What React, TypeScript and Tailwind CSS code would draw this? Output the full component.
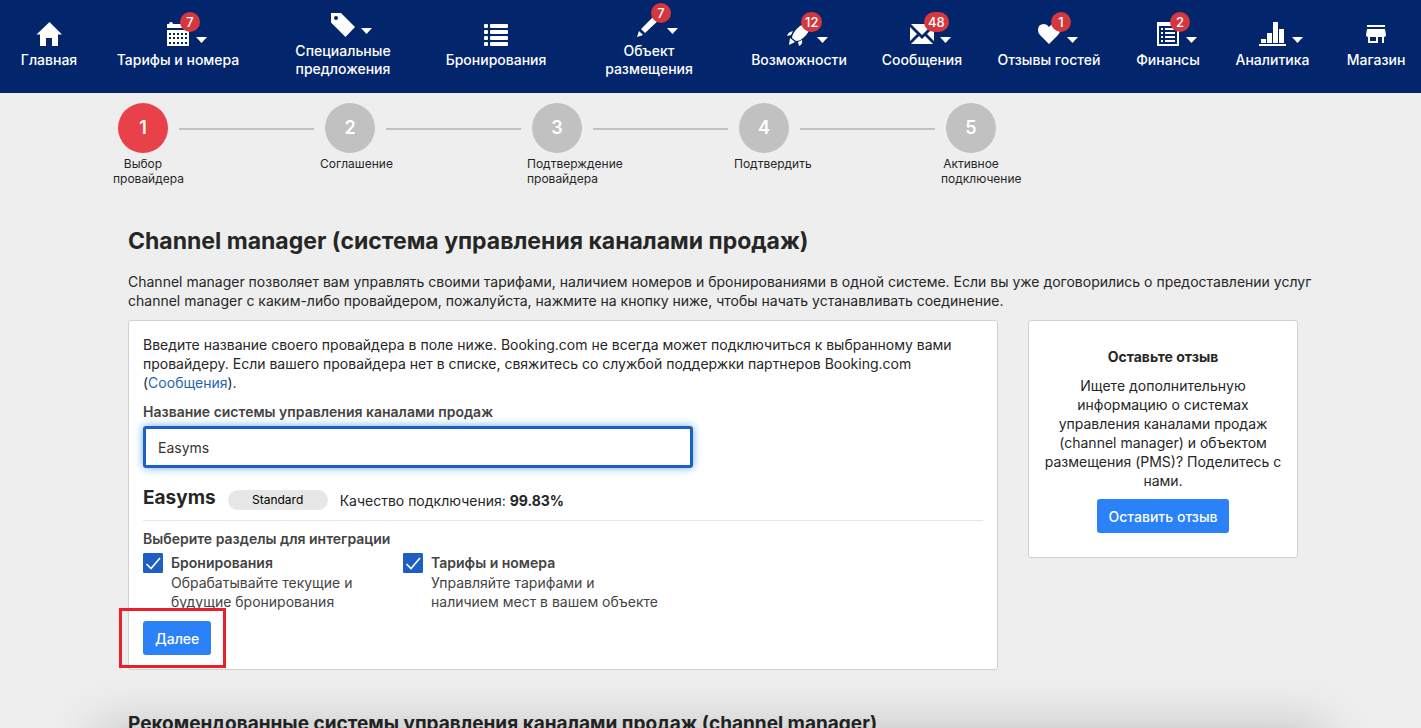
import React, { useState } from "react";

interface NavItem {
  title: string;
  icon: React.ReactNode;
  badge?: string;
  menu?: boolean;
}

interface Section {
  id: string;
  title: string;
  text: string;
}

const Icon: React.FC<{ children: React.ReactNode }> = ({ children }) => (
  <svg viewBox="0 0 24 24" className="w-6 h-6" fill="currentColor">
    {children}
  </svg>
);

const navItems: NavItem[] = [
  {
    title: "Главная",
    icon: (
      <svg viewBox="0 0 26 24" className="w-[26px] h-6" fill="currentColor">
        <path d="M13.500 0 .5 12.500H4V24h6v-8h6v8h6V12.500h4z" />
      </svg>
    ),
  },
  {
    title: "Тарифы и номера",
    badge: "7",
    menu: true,
    icon: (
      <Icon>
        <path d="M1 6V2h2q0-2 2-2t2 2h16v4z" />
        <path
          fillRule="evenodd"
          d="M1 8h22v16H1zM3 11v2h2v-2zm4 0v2h2v-2zm4 0v2h2v-2zm4 0v2h2v-2zm4 0v2h2v-2zM3 15v2h2v-2zm4 0v2h2v-2zm4 0v2h2v-2zm4 0v2h2v-2zm4 0v2h2v-2zM3 20v2h2v-2zm4 0v2h2v-2zm4 0v2h2v-2zm4 0v2h2v-2zm4 0v2h2v-2z"
        />
      </Icon>
    ),
  },
  {
    title: "Специальные предложения",
    menu: true,
    icon: (
      <Icon>
        <path
          fillRule="evenodd"
          d="M0 0h10l14 14-9.500 10L0 9.500zM5 3a2 2 0 1 0 0 4 2 2 0 0 0 0-4z"
        />
      </Icon>
    ),
  },
  {
    title: "Бронирования",
    icon: (
      <Icon>
        <rect x="0" y="2" width="4" height="4" rx="1" />
        <rect x="6" y="2" width="18" height="4" rx="1" />
        <rect x="0" y="8" width="4" height="4" rx="1" />
        <rect x="6" y="8" width="18" height="4" rx="1" />
        <rect x="0" y="14" width="4" height="4" rx="1" />
        <rect x="6" y="14" width="18" height="4" rx="1" />
        <rect x="0" y="20" width="4" height="4" rx="1" />
        <rect x="6" y="20" width="18" height="4" rx="1" />
      </Icon>
    ),
  },
  {
    title: "Объект размещения",
    badge: "7",
    menu: true,
    icon: (
      <Icon>
        <path d="M0 24l2-6 4 4zM4 16 19 1l5 4L8 20z" />
      </Icon>
    ),
  },
  {
    title: "Возможности",
    badge: "12",
    menu: true,
    icon: (
      <Icon>
        <path d="M23 1c-7 0-11 3-15 8-2 3-3 5-3 7l4 3c3 0 5-1 7-3 5-4 7-8 7-15z" />
        <path d="M6 9 4 13 0 14q1-4 6-5zM3 16l5 4-6 3zM15 18q1 4-3 6l-1-4z" />
      </Icon>
    ),
  },
  {
    title: "Сообщения",
    badge: "48",
    menu: true,
    icon: (
      <Icon>
        <path d="M1 2h22L12 13zM0 5l7 7-7 7zM24 5v14l-7-7zM1 22l8-8 3 3 3-3 8 8z" />
      </Icon>
    ),
  },
  {
    title: "Отзывы гостей",
    badge: "1",
    menu: true,
    icon: (
      <Icon>
        <path d="M12 22 3 13Q1 11 1 8q0-6 6-6 3 0 5 3 2-3 5-3 6 0 6 6 0 3-2 5z" />
      </Icon>
    ),
  },
  {
    title: "Финансы",
    badge: "2",
    menu: true,
    icon: (
      <Icon>
        <path
          fillRule="evenodd"
          d="M1 0h22v24H1zM3 4v18h18V4zM5 6h2v2H5zm4 0h10v2H9zM5 10h2v2H5zm4 0h10v2H9zM5 14h2v2H5zm4 0h10v2H9zM5 18h2v2H5zm4 0h10v2H9z"
        />
      </Icon>
    ),
  },
  {
    title: "Аналитика",
    menu: true,
    icon: (
      <svg viewBox="1 0 27 24" className="w-[27px] h-6" fill="currentColor">
        <path d="M1 22h27v2H1zM3 17h5v4H3zM9 11h5v10H9zM15 0h5v21h-5zM21 7h5v14h-5z" />
      </svg>
    ),
  },
  {
    title: "Магазин",
    icon: (
      <Icon>
        <path d="M3 3h18v2H3z" />
        <path
          fillRule="evenodd"
          d="M3 7h18l1 6q0 2-2 2v6h-2v-6h-4v6H4v-6q-2 0-2-2zM6 15v4h6v-4z"
        />
      </Icon>
    ),
  },
];

const steps: string[] = [
  "Выбор провайдера",
  "Соглашение",
  "Подтверждение провайдера",
  "Подтвердить",
  "Активное подключение",
];

const sections: Section[] = [
  {
    id: "reservations",
    title: "Бронирования",
    text: "Обрабатывайте текущие и будущие бронирования",
  },
  {
    id: "rates",
    title: "Тарифы и номера",
    text: "Управляйте тарифами и наличием мест в вашем объекте",
  },
];

const NavLink: React.FC<{ item: NavItem }> = ({ item }) => (
  <a
    href="#"
    className="flex flex-col items-center justify-center gap-[5px] pb-0.5 text-center text-sm leading-[18px] font-medium"
  >
    <span className="relative">
      {item.icon}
      {item.badge && (
        <span className="absolute left-3.5 -top-2.5 h-5 min-w-5 px-1 rounded-full bg-[#d4373e] text-[13px] leading-5">
          {item.badge}
        </span>
      )}
      {item.menu && (
        <svg
          viewBox="0 0 11 6"
          className="absolute left-full top-[15px] ml-1.5 w-[11px] h-1.5"
          fill="currentColor"
        >
          <path d="M0 0h11L5.500 6z" />
        </svg>
      )}
    </span>
    <span className="max-w-[130px]">{item.title}</span>
  </a>
);

const Navigation: React.FC = () => (
  <nav className="grid grid-cols-[90fr_168fr_162fr_144fr_162fr_138fr_108fr_146fr_92fr_117fr_90fr] h-[93px] pl-1 bg-[#03256c] text-white">
    {navItems.map((item) => (
      <NavLink key={item.title} item={item} />
    ))}
  </nav>
);

const Stepper: React.FC = () => (
  <ol className="flex pl-[113px] pt-2.5 h-[98px]">
    {steps.map((step, index) => (
      <li key={step} className="flex">
        {index > 0 && (
          <span className="mt-[25px] mx-1.5 w-[135px] h-0.5 bg-[#c1c1c1]" />
        )}
        <div className="w-[60px] text-center text-xs leading-[15px]">
          <span
            className={`block mx-auto mb-[3px] size-[50px] rounded-full text-lg leading-[50px] font-semibold text-white ${
              index === 0 ? "bg-[#e94149]" : "bg-[#c1c1c1]"
            }`}
          >
            {index + 1}
          </span>
          {step}
        </div>
      </li>
    ))}
  </ol>
);

const SectionCheckbox: React.FC<{ section: Section }> = ({ section }) => {
  const [checked, setChecked] = useState<boolean>(true);

  return (
    <div className="flex gap-2 w-[260px] text-[#444]">
      <span className="relative size-5 shrink-0">
        <input
          id={section.id}
          type="checkbox"
          checked={checked}
          onChange={() => setChecked(!checked)}
          className="block size-5 appearance-none rounded-[1px] border border-[#1f5fc4] checked:bg-[#1f5fc4]"
        />
        {checked && (
          <svg
            viewBox="0 0 20 20"
            className="absolute inset-0 pointer-events-none"
            fill="none"
            stroke="white"
            strokeWidth="1.6"
          >
            <path d="M3.500 11 8 15.500 17 5" />
          </svg>
        )}
      </span>
      <label htmlFor={section.id} className="flex-1">
        <span className="block leading-5 font-semibold">{section.title}</span>
        {section.text}
      </label>
    </div>
  );
};

const ProviderCard: React.FC = () => {
  const [provider, setProvider] = useState<string>("Easyms");

  return (
    <section className="flex-1 h-fit p-3.5 bg-white border border-[#d0d0d0] rounded-[3px]">
      <p>
        Введите название своего провайдера в поле ниже. Booking.com не всегда
        может подключиться к выбранному вами провайдеру. Если вашего провайдера
        нет в списке, свяжитесь со службой поддержки партнеров Booking.com (
        <a href="#" className="text-[#1f64b0]">
          Сообщения
        </a>
        ).
      </p>
      <label
        htmlFor="provider"
        className="block mt-2.5 mb-[5px] font-semibold text-[#444]"
      >
        Название системы управления каналами продаж
      </label>
      <input
        id="provider"
        type="text"
        value={provider}
        onChange={(e) => setProvider(e.target.value)}
        className="block w-[550px] h-[42px] px-3 border-3 border-[#1f5fc4] rounded-[3px] text-[#333] shadow-[0_0_8px_#66afe9] outline-none"
      />
      <div className="flex items-end gap-3 mt-[18px] pb-2.5 border-b border-[#e6e6e6]">
        <h2 className="text-[19px] leading-6 font-bold">Easyms</h2>
        <span className="w-[100px] rounded-full bg-[#e7e7e7] text-xs leading-5 text-center text-black">
          Standard
        </span>
        <span>
          Качество подключения: <b>99.83%</b>
        </span>
      </div>
      <p className="mt-2 mb-[5px] font-semibold text-[#444]">
        Выберите разделы для интеграции
      </p>
      <div className="flex">
        {sections.map((section) => (
          <SectionCheckbox key={section.id} section={section} />
        ))}
      </div>
      <div className="relative w-fit mt-2.5">
        <button className="h-[34px] px-3 rounded-[3px] bg-[#2a81f8] text-white font-medium">
          Далее
        </button>
        <span className="absolute -left-6 -right-[15px] -top-[13px] -bottom-[13px] border-3 border-[#e8202a] pointer-events-none" />
      </div>
    </section>
  );
};

const FeedbackCard: React.FC = () => (
  <aside className="w-[270px] h-fit px-3 pt-[26px] pb-6 bg-white border border-[#d0d0d0] rounded-[3px] text-center">
    <h2 className="font-bold">Оставьте отзыв</h2>
    <p className="mt-2.5 mb-[9px]">
      Ищете дополнительную информацию о системах управления каналами продаж
      (channel manager) и объектом размещения (PMS)? Поделитесь с нами.
    </p>
    <button className="h-[34px] px-3 rounded-[3px] bg-[#2a81f8] text-white font-medium">
      Оставить отзыв
    </button>
  </aside>
);

const App: React.FC = () => {
  return (
    <div className="relative h-screen overflow-hidden bg-[#eee] font-['Inter','Liberation_Sans',sans-serif] text-sm leading-[19px] text-[#262626]">
      <Navigation />
      <Stepper />
      <main className="pl-32 pr-[123px] pt-9">
        <h1 className="text-[23px] leading-7 font-bold">
          Channel manager (система управления каналами продаж)
        </h1>
        <p className="mt-[17px] mb-2.5 -mr-8">
          Channel manager позволяет вам управлять своими тарифами, наличием
          номеров и бронированиями в одной системе. Если вы уже договорились о
          предоставлении услуг channel manager с каким-либо провайдером,
          пожалуйста, нажмите на кнопку ниже, чтобы начать устанавливать
          соединение.
        </p>
        <div className="flex gap-[30px]">
          <ProviderCard />
          <FeedbackCard />
        </div>
        <h2 className="mt-[42px] text-[19px] leading-6 font-bold">
          Рекомендованные системы управления каналами продаж (channel manager)
        </h2>
      </main>
      <div className="absolute inset-x-24 top-full h-60 shadow-[0_0_50px_rgba(0,0,0,0.2)]" />
    </div>
  );
};

export default App;
